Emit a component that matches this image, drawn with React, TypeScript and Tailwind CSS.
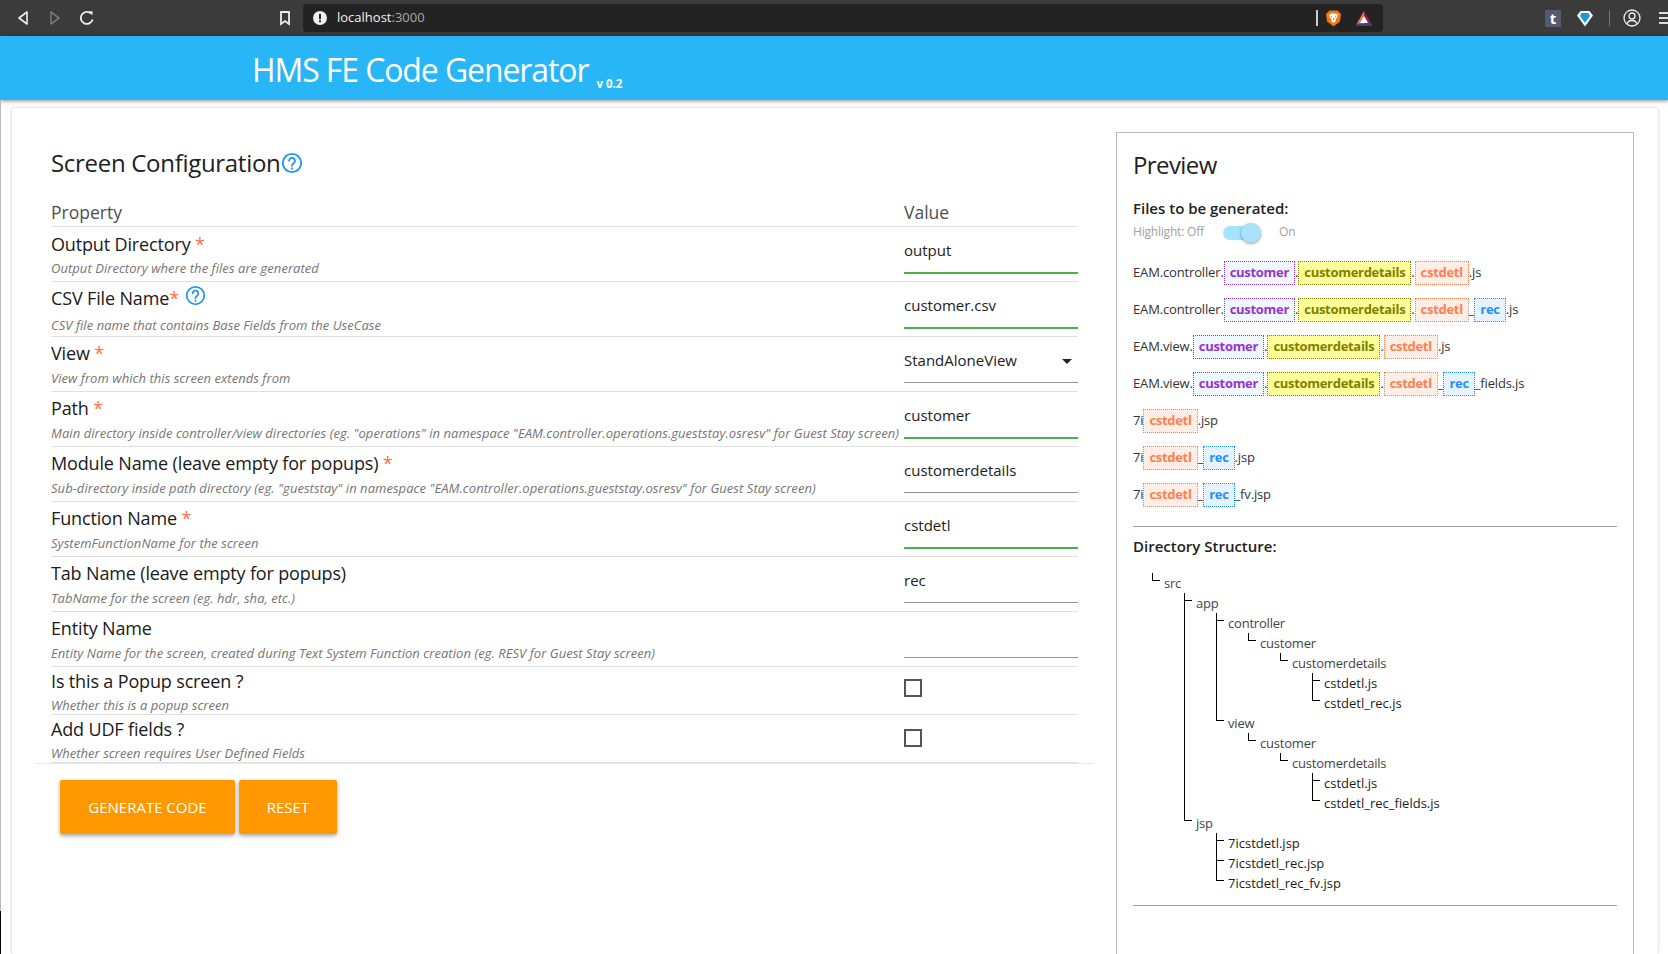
type Seg = "customer" | "customerdetails" | "cstdetl" | "rec";

const chipStyles: Record<Seg, string> = {
  customer: "bg-[#f0f8ff] border-[#9932cc] text-[#9932cc]",
  customerdetails: "bg-[#ffff99] border-[#808000] text-[#808000]",
  cstdetl: "bg-[#ffeee6] border-[#ff7f50] text-[#ff7f50]",
  rec: "bg-[#e6f3ff] border-[#1e90ff] text-[#1e90ff]",
};

function Chip({ name }: { name: Seg }) {
  return (
    <span className={`inline-flex h-6 items-center border border-dotted px-[5px] text-[13px] font-bold tracking-[-0.3px] ${chipStyles[name]}`}>
      {name}
    </span>
  );
}

const files: string[][] = [
  ["EAM.controller.", "#customer", ".", "#customerdetails", ".", "#cstdetl", ".js"],
  ["EAM.controller.", "#customer", ".", "#customerdetails", ".", "#cstdetl", "_", "#rec", ".js"],
  ["EAM.view.", "#customer", ".", "#customerdetails", ".", "#cstdetl", ".js"],
  ["EAM.view.", "#customer", ".", "#customerdetails", ".", "#cstdetl", "_", "#rec", "_fields.js"],
  ["7i", "#cstdetl", ".jsp"],
  ["7i", "#cstdetl", "_", "#rec", ".jsp"],
  ["7i", "#cstdetl", "_", "#rec", "_fv.jsp"],
];

type Field = {
  label: string;
  required?: string;
  help?: boolean;
  desc: string;
  value?: string;
  green?: boolean;
  select?: boolean;
  check?: boolean;
};

const fields: Field[] = [
  { label: "Output Directory", required: " *", desc: "Output Directory where the files are generated", value: "output", green: true },
  { label: "CSV File Name", required: "*", help: true, desc: "CSV file name that contains Base Fields from the UseCase", value: "customer.csv", green: true },
  { label: "View", required: " *", desc: "View from which this screen extends from", value: "StandAloneView", select: true },
  { label: "Path", required: " *", desc: 'Main directory inside controller/view directories (eg. "operations" in namespace "EAM.controller.operations.gueststay.osresv" for Guest Stay screen)', value: "customer", green: true },
  { label: "Module Name (leave empty for popups)", required: " *", desc: 'Sub-directory inside path directory (eg. "gueststay" in namespace "EAM.controller.operations.gueststay.osresv" for Guest Stay screen)', value: "customerdetails" },
  { label: "Function Name", required: " *", desc: "SystemFunctionName for the screen", value: "cstdetl", green: true },
  { label: "Tab Name (leave empty for popups)", desc: "TabName for the screen (eg. hdr, sha, etc.)", value: "rec" },
  { label: "Entity Name", desc: "Entity Name for the screen, created during Text System Function creation (eg. RESV for Guest Stay screen)", value: "" },
  { label: "Is this a Popup screen ?", desc: "Whether this is a popup screen", check: true },
  { label: "Add UDF fields ?", desc: "Whether screen requires User Defined Fields", check: true },
];

type TreeNode = { name: string; dark?: boolean; kids?: TreeNode[] };

const detailKids = (leaf: string): TreeNode[] => [
  {
    name: "customer",
    kids: [
      {
        name: "customerdetails",
        kids: [
          { name: "cstdetl.js", dark: true },
          { name: leaf, dark: true },
        ],
      },
    ],
  },
];

const tree: TreeNode[] = [
  {
    name: "src",
    kids: [
      {
        name: "app",
        kids: [
          { name: "controller", kids: detailKids("cstdetl_rec.js") },
          { name: "view", kids: detailKids("cstdetl_rec_fields.js") },
        ],
      },
      {
        name: "jsp",
        kids: [
          { name: "7icstdetl.jsp", dark: true },
          { name: "7icstdetl_rec.jsp", dark: true },
          { name: "7icstdetl_rec_fv.jsp", dark: true },
        ],
      },
    ],
  },
];

function Tree({ nodes, nested }: { nodes: TreeNode[]; nested?: boolean }) {
  return (
    <ul className={nested ? "ml-5" : ""}>
      {nodes.map((node, i) => {
        const last = i === nodes.length - 1;
        return (
          <li key={node.name + i} className="relative pl-3">
            <span className={`absolute left-0 top-0 w-px bg-black ${last ? "h-[8px]" : "h-full"}`} />
            <span className="absolute left-0 top-[7px] h-px w-2 bg-black" />
            <div className={`h-5 text-[13px] leading-5 ${node.dark ? "text-[#1c1c1c]" : "tracking-[-0.2px] text-[#444]"}`}>{node.name}</div>
            {node.kids && <Tree nodes={node.kids} nested />}
          </li>
        );
      })}
    </ul>
  );
}

function HelpIcon({ size }: { size: number }) {
  return (
    <svg width={size} height={size} viewBox="0 0 24 24" fill="none" stroke="#2196f3" strokeWidth="2">
      <circle cx="12" cy="12" r="10" />
      <path d="M8.8 9.6a3.2 3.2 0 1 1 5 2.6c-1.1.8-1.800 1.400-1.800 2.800" strokeLinecap="round" />
      <circle cx="12" cy="18" r="1.200" fill="#2196f3" stroke="none" />
    </svg>
  );
}

function BrowserBar() {
  return (
    <div className="flex h-9 items-center bg-[#3b3b3b]">
      <div className="flex w-[303px] shrink-0 items-center">
        <svg className="ml-[17px]" width="12" height="16" viewBox="0 0 12 16" fill="none" stroke="#eee" strokeWidth="1.6">
          <path d="M10 2 2 8l8 6z" strokeLinejoin="round" />
        </svg>
        <svg className="ml-5" width="12" height="16" viewBox="0 0 12 16" fill="none" stroke="#777" strokeWidth="1.6">
          <path d="M2 2l8 6-8 6z" strokeLinejoin="round" />
        </svg>
        <svg className="ml-[18px]" width="16" height="16" viewBox="0 0 16 16" fill="none" stroke="#eee" strokeWidth="1.8">
          <path d="M13.600 9.500A6 6 0 1 1 12 3.600" />
          <path d="M9.500 1.200h4v4z" fill="#eee" stroke="none" />
        </svg>
        <svg className="ml-[184px]" width="12" height="16" viewBox="0 0 12 16" fill="none" stroke="#eee" strokeWidth="1.8">
          <path d="M2 2h8v12l-4-3-4 3z" />
        </svg>
      </div>
      <div className="flex h-7 w-[1080px] shrink-0 items-center rounded-[4px] bg-[#232323] pl-[10px]">
        <svg width="14" height="14" viewBox="0 0 14 14">
          <circle cx="7" cy="7" r="7" fill="#f2f2f2" />
          <rect x="6" y="3" width="2" height="5.200" fill="#232323" />
          <rect x="6" y="9.300" width="2" height="2" fill="#232323" />
        </svg>
        <span className="ml-[10px] text-[13px] text-[#f2f2f2]">
          localhost<span className="text-[#a8a8a8]">:3000</span>
        </span>
        <span className="ml-auto h-4 w-[2px] bg-[#ccc]" />
        <svg className="ml-[8px]" width="15" height="17" viewBox="0 0 15 17">
          <path d="M3.500.5h8L15 4l-1 7.500-6.500 5L1 11.500 0 4z" fill="#f9730f" />
          <path d="M3 4.500l2.500-1h4l2.500 1-1 3.500-1.500 1 .5 2-2.500 2-2.500-2 .5-2-1.500-1z" fill="#fff" />
          <path d="M4.800 6.500l1.500.5M10.200 6.500 8.700 7M7.500 8v2" stroke="#f9730f" strokeWidth="1" />
        </svg>
        <svg className="ml-[15px] mr-[11px]" width="16" height="15" viewBox="0 0 16 15">
          <path d="M8 0 0 14h8z" fill="#f1734a" />
          <path d="M8 0l8 14H8z" fill="#9c1f46" />
          <path d="M8 5l4 7H4z" fill="#fff" />
          <path d="M0 12.500h16V15H0z" fill="#3f4478" />
        </svg>
      </div>
      <div className="ml-[162px] flex items-center">
        <div className="flex h-[17px] w-[16px] items-center justify-center bg-[#555b6b] text-[15px] font-bold text-white">t</div>
        <svg className="ml-[16px]" width="16" height="17" viewBox="0 0 16 17">
          <path d="M3.500 1h9L16 5.500 8 16.500 0 5.500z" fill="#fff" />
          <path d="M4.500 3h7l1.500 3-5 7-5-7z" fill="#1b9ae0" />
        </svg>
        <span className="ml-[16px] h-[16px] w-px bg-[#777]" />
        <svg className="ml-[13px]" width="18" height="18" viewBox="0 0 18 18" fill="none" stroke="#eee" strokeWidth="1.300">
          <circle cx="9" cy="9" r="8" />
          <circle cx="9" cy="7" r="3" />
          <path d="M3.800 15c1-2.500 3-3.500 5.200-3.500s4.200 1 5.200 3.500" />
        </svg>
        <div className="ml-[18px] flex h-[12px] w-[12px] flex-col justify-between">
          <span className="h-[2px] bg-[#ddd]" />
          <span className="h-[2px] bg-[#ddd]" />
          <span className="h-[2px] bg-[#ddd]" />
        </div>
      </div>
    </div>
  );
}

function FieldRow({ field, idx }: { field: Field; idx: number }) {
  const short = field.check;
  const top = short ? "pt-[2px]" : idx === 0 ? "pt-[5px]" : "pt-[4px]";
  const gap = idx === 1 ? "mt-[5px]" : short || idx === 0 ? "mt-[2px]" : "mt-[3px]";
  return (
    <div className={`flex border-b border-[#e0e0e0] ${short ? "h-[48px]" : "h-[55px]"}`}>
      <div className={`w-[853px] shrink-0 ${top}`}>
        <div className="flex h-6 items-center whitespace-pre text-[18px] tracking-[-0.15px] text-[#1a1a1a]">
          {field.label}
          {field.required && <span className="text-[#ff7043]">{field.required}</span>}
          {field.help && (
            <span className="-mt-[5px] ml-[6px]">
              <HelpIcon size={21} />
            </span>
          )}
        </div>
        <div className={`h-5 whitespace-nowrap text-[13px] leading-5 tracking-[0.05px] text-[#757575] italic ${gap}`}>{field.desc}</div>
      </div>
      <div className="w-[174px] pt-[2px]">
        {field.check ? (
          <input type="checkbox" readOnly className={`h-[18px] w-[18px] appearance-none border-2 border-[#555] ${idx === 8 ? "mt-[10px]" : "mt-[12px]"}`} />
        ) : (
          <div className={`relative flex items-center ${field.green ? "h-[45px] border-b-2 border-[#4caf50]" : "h-[44px] border-b border-[#949494]"}`}>
            <input readOnly defaultValue={field.value} className="w-full bg-transparent text-[15px] text-[#212121] outline-none" />
            {field.select && <span className="absolute right-[6px] top-[20px] h-0 w-0 border-x-[5px] border-t-[5px] border-x-transparent border-t-[#222]" />}
          </div>
        )}
      </div>
    </div>
  );
}

export default function App() {
  return (
    <div className="min-h-[954px] overflow-hidden bg-white font-['Open_Sans',sans-serif]">
      <BrowserBar />
      <header className="relative flex h-16 items-center bg-[#29b6f6] pl-[252px] text-white shadow-[0_1px_4px_rgba(0,0,0,0.45)]">
        <h1 className="mt-[4px] text-[32px] font-normal tracking-[-1.1px]">HMS FE Code Generator</h1>
        <span className="ml-[8px] mt-[32px] text-[11.5px] font-bold">v 0.2</span>
      </header>
      <div className="relative border-l border-[#bbb] pt-2">
        <span className="absolute -left-px top-[811px] h-[43px] w-px bg-black" />
        <main className="ml-[11px] mr-[10px] flex h-[846px] rounded-[2px] bg-white shadow-[0_0_3px_rgba(0,0,0,0.25)]">
          <section className="w-[1082px] shrink-0">
            <div className="pl-[39px] pt-[37px]">
              <div className="flex h-[36px] items-center">
                <h2 className="text-[24px] font-normal tracking-[-0.3px] text-[#212121]">Screen Configuration</h2>
                <span className="ml-px">
                  <HelpIcon size={22} />
                </span>
              </div>
              <div className="mt-[9px] flex h-[37px] w-[1027px] items-center border-b border-[#e0e0e0] pt-[9px] text-[17.5px] text-[#4f4f4f]">
                <div className="w-[853px]">Property</div>
                <div>Value</div>
              </div>
              <div className="w-[1027px]">
                {fields.map((f, i) => (
                  <FieldRow key={f.label} field={f} idx={i} />
                ))}
              </div>
            </div>
            <div className="ml-6 w-[1058px] border-t border-[#e8e8e8] pl-[24px] pt-[16px]">
              <div className="flex gap-1">
                <button className="h-[54px] w-[175px] rounded-[2px] bg-[#ff9800] text-[15px] text-white shadow-[0_2px_4px_rgba(0,0,0,0.35)]">GENERATE CODE</button>
                <button className="h-[54px] w-[98px] rounded-[2px] bg-[#ff9800] text-[15px] text-white shadow-[0_2px_4px_rgba(0,0,0,0.35)]">RESET</button>
              </div>
            </div>
          </section>
          <aside className="ml-[22px] mt-6 w-[518px] border border-b-0 border-[#bdbdbd] px-4 pt-[14px]">
            <h2 className="h-9 text-[24px] font-normal leading-9 tracking-[-0.6px] text-[#212121]">Preview</h2>
            <h3 className="mt-[14px] text-[15px] font-semibold leading-[22px] text-[#222]">Files to be generated:</h3>
            <div className="mt-[3px] flex h-[20px] items-center text-[12px] tracking-[-0.2px] text-[#a0a0a0]">
              <span className="w-[90px]">Highlight: Off</span>
              <span className="relative top-px h-[14px] w-[38px] rounded-full bg-[#a5e4ff]">
                <span className="absolute -top-[3px] right-0 h-5 w-5 rounded-full bg-[#a9e2fd] shadow-[0_1px_3px_rgba(0,0,0,0.4)]" />
              </span>
              <span className="ml-[18px]">On</span>
            </div>
            <div className="mt-[19px] flex flex-col gap-[13px]">
              {files.map((row, i) => (
                <div key={i} className="flex h-6 items-center whitespace-pre text-[13px] tracking-[-0.15px] text-[#333]">
                  {row.map((part, j) =>
                    part.startsWith("#") ? <Chip key={j} name={part.slice(1) as Seg} /> : <span key={j}>{part}</span>,
                  )}
                </div>
              ))}
            </div>
            <div className="mt-[19px] border-t border-[#a0a0a0]" />
            <h3 className="mt-[8px] text-[15px] font-semibold leading-[22px] text-[#222]">Directory Structure:</h3>
            <div className="ml-[19px] mt-[16px]">
              <Tree nodes={tree} />
            </div>
            <div className="mt-[12px] border-t border-[#a0a0a0]" />
          </aside>
        </main>
      </div>
    </div>
  );
}
